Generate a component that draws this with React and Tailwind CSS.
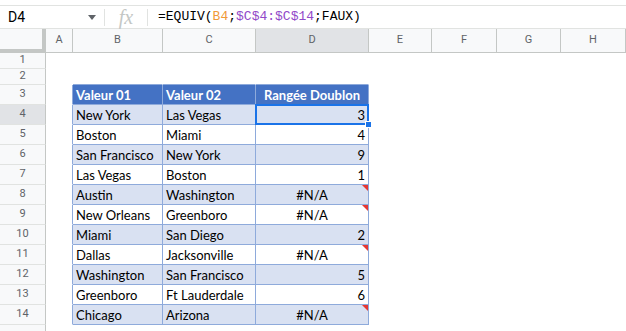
import React from "react";

const cols = [
  { key: "A", w: 27 },
  { key: "B", w: 90 },
  { key: "C", w: 93 },
  { key: "D", w: 113 },
  { key: "E", w: 63 },
  { key: "F", w: 65 },
  { key: "G", w: 64 },
  { key: "H", w: 65 },
];

const data = [
  ["New York", "Las Vegas", "3"],
  ["Boston", "Miami", "4"],
  ["San Francisco", "New York", "9"],
  ["Las Vegas", "Boston", "1"],
  ["Austin", "Washington", "#N/A"],
  ["New Orleans", "Greenboro", "#N/A"],
  ["Miami", "San Diego", "2"],
  ["Dallas", "Jacksonville", "#N/A"],
  ["Washington", "San Francisco", "5"],
  ["Greenboro", "Ft Lauderdale", "6"],
  ["Chicago", "Arizona", "#N/A"],
];

const cellFont = { fontFamily: "Lato, 'Open Sans', sans-serif" };
const uiFont = { fontFamily: "Roboto, 'Liberation Sans', sans-serif" };

function RowHeader({ n, h, active }) {
  return (
    <div
      className={`w-[46px] shrink-0 border-r border-b border-r-[#c4c7c5] border-b-[#e1e3e1] flex items-center justify-center text-[11px] text-[#5f6368] ${
        active ? "bg-[#e1e3e6]" : "bg-[#f8f9fa]"
      }`}
      style={{ ...uiFont, height: h }}
    >
      {n}
    </div>
  );
}

function EmptyCell({ w, h, right, bottom }) {
  return (
    <div
      className={`shrink-0 border-r border-b ${right ? "border-r-[#8eaadb]" : "border-r-white"} ${
        bottom ? "border-b-[#8eaadb]" : "border-b-white"
      }`}
      style={{ width: w, height: h }}
    />
  );
}

export default function App() {
  return (
    <div className="w-[626px] h-[331px] overflow-hidden bg-white">
      <div className="h-[5px]" />
      {/* formula bar */}
      <div className="h-[24px] border-t border-b border-[#e1e3e1] flex items-center" style={uiFont}>
        <div className="w-[104px] flex items-center justify-between pl-[8px] pr-[8px] text-[14px] text-black">
          <span>D4</span>
          <span className="w-0 h-0 border-l-[4px] border-r-[4px] border-t-[5px] border-l-transparent border-r-transparent border-t-[#5f6368]" />
        </div>
        <div className="w-px h-[17px] bg-[#e1e3e1]" />
        <div className="w-[42px] flex items-center justify-center">
          <span className="italic text-[20px] leading-none text-[#c4c7c5]" style={{ fontFamily: "'Liberation Serif', serif" }}>
            fx
          </span>
        </div>
        <div className="w-px h-[17px] bg-[#e1e3e1]" />
        <div className="pl-[10px] text-[13px] text-black" style={{ fontFamily: "'Liberation Mono', monospace" }}>
          =EQUIV(<span className="text-[#f09a38]">B4</span>;<span className="text-[#9149c9]">$C$4:$C$14</span>;FAUX)
        </div>
      </div>

      {/* column headers */}
      <div className="flex h-[24px]" style={uiFont}>
        <div className="w-[46px] shrink-0 bg-[#f8f9fa] border-r-[4px] border-b-[4px] border-[#c4c7c5]" />
        {cols.map((c) => (
          <div
            key={c.key}
            className={`shrink-0 border-r border-b border-r-[#c4c7c5] border-b-[#c4c7c5] flex items-center justify-center text-[11px] text-[#5f6368] ${
              c.key === "D" ? "bg-[#e1e3e6]" : "bg-[#f8f9fa]"
            }`}
            style={{ width: c.w }}
          >
            {c.key}
          </div>
        ))}
      </div>

      {/* rows 1-2 */}
      {[1, 2].map((n) => (
        <div key={n} className="flex">
          <RowHeader n={n} h={16} />
          {cols.map((c) => (
            <EmptyCell key={c.key} w={c.w} h={16} bottom={n === 2 && ["B", "C", "D"].includes(c.key)} />
          ))}
        </div>
      ))}

      {/* row 3 header */}
      <div className="flex" style={cellFont}>
        <RowHeader n={3} h={20} />
        <EmptyCell w={27} h={20} right />
        {["Valeur 01", "Valeur 02", "Rangée Doublon"].map((t, i) => (
          <div
            key={t}
            className={`shrink-0 h-[20px] bg-[#4472c4] border-r border-b border-[#8eaadb] flex items-center pt-[2px] text-[13px] font-bold text-white ${
              i === 2 ? "justify-center" : "pl-[3px]"
            }`}
            style={{ width: cols[i + 1].w }}
          >
            {t}
          </div>
        ))}
        {cols.slice(4).map((c) => (
          <EmptyCell key={c.key} w={c.w} h={20} />
        ))}
      </div>

      {/* data rows */}
      {data.map((r, i) => {
        const n = i + 4;
        const bg = i % 2 === 0 ? "bg-[#d9e1f2]" : "bg-white";
        const err = r[2] === "#N/A";
        return (
          <div key={n} className="flex" style={cellFont}>
            <RowHeader n={n} h={20} active={n === 4} />
            <EmptyCell w={27} h={20} right />
            <div className={`shrink-0 w-[90px] h-[20px] ${bg} border-r border-b border-[#8eaadb] flex items-center pt-[2px] pl-[3px] text-[13px] text-black whitespace-nowrap`}>
              {r[0]}
            </div>
            <div className={`shrink-0 w-[93px] h-[20px] ${bg} border-r border-b border-[#8eaadb] flex items-center pt-[2px] pl-[3px] text-[13px] text-black whitespace-nowrap`}>
              {r[1]}
            </div>
            <div
              className={`relative shrink-0 w-[113px] h-[20px] ${bg} border-r border-b border-[#8eaadb] flex items-center pt-[2px] text-[13px] text-black ${
                err ? "justify-center" : "justify-end pr-[3px]"
              }`}
            >
              {r[2]}
              {err && (
                <span className="absolute top-0 right-0 w-0 h-0 border-l-[6px] border-t-[6px] border-l-transparent border-t-[#e53935]" />
              )}
              {n === 4 && (
                <>
                  <span className="absolute top-[-1px] left-[-1px] right-[-1px] bottom-[-1px] border-2 border-[#1a73e8]" />
                  <span className="absolute z-10 right-[-4px] bottom-[-4px] w-[7px] h-[7px] bg-[#1a73e8] border border-white" />
                </>
              )}
            </div>
            {cols.slice(4).map((c) => (
              <EmptyCell key={c.key} w={c.w} h={20} />
            ))}
          </div>
        );
      })}

      {/* row 15, mostly off screen */}
      <div className="flex">
        <RowHeader n="" h={20} />
      </div>
    </div>
  );
}
